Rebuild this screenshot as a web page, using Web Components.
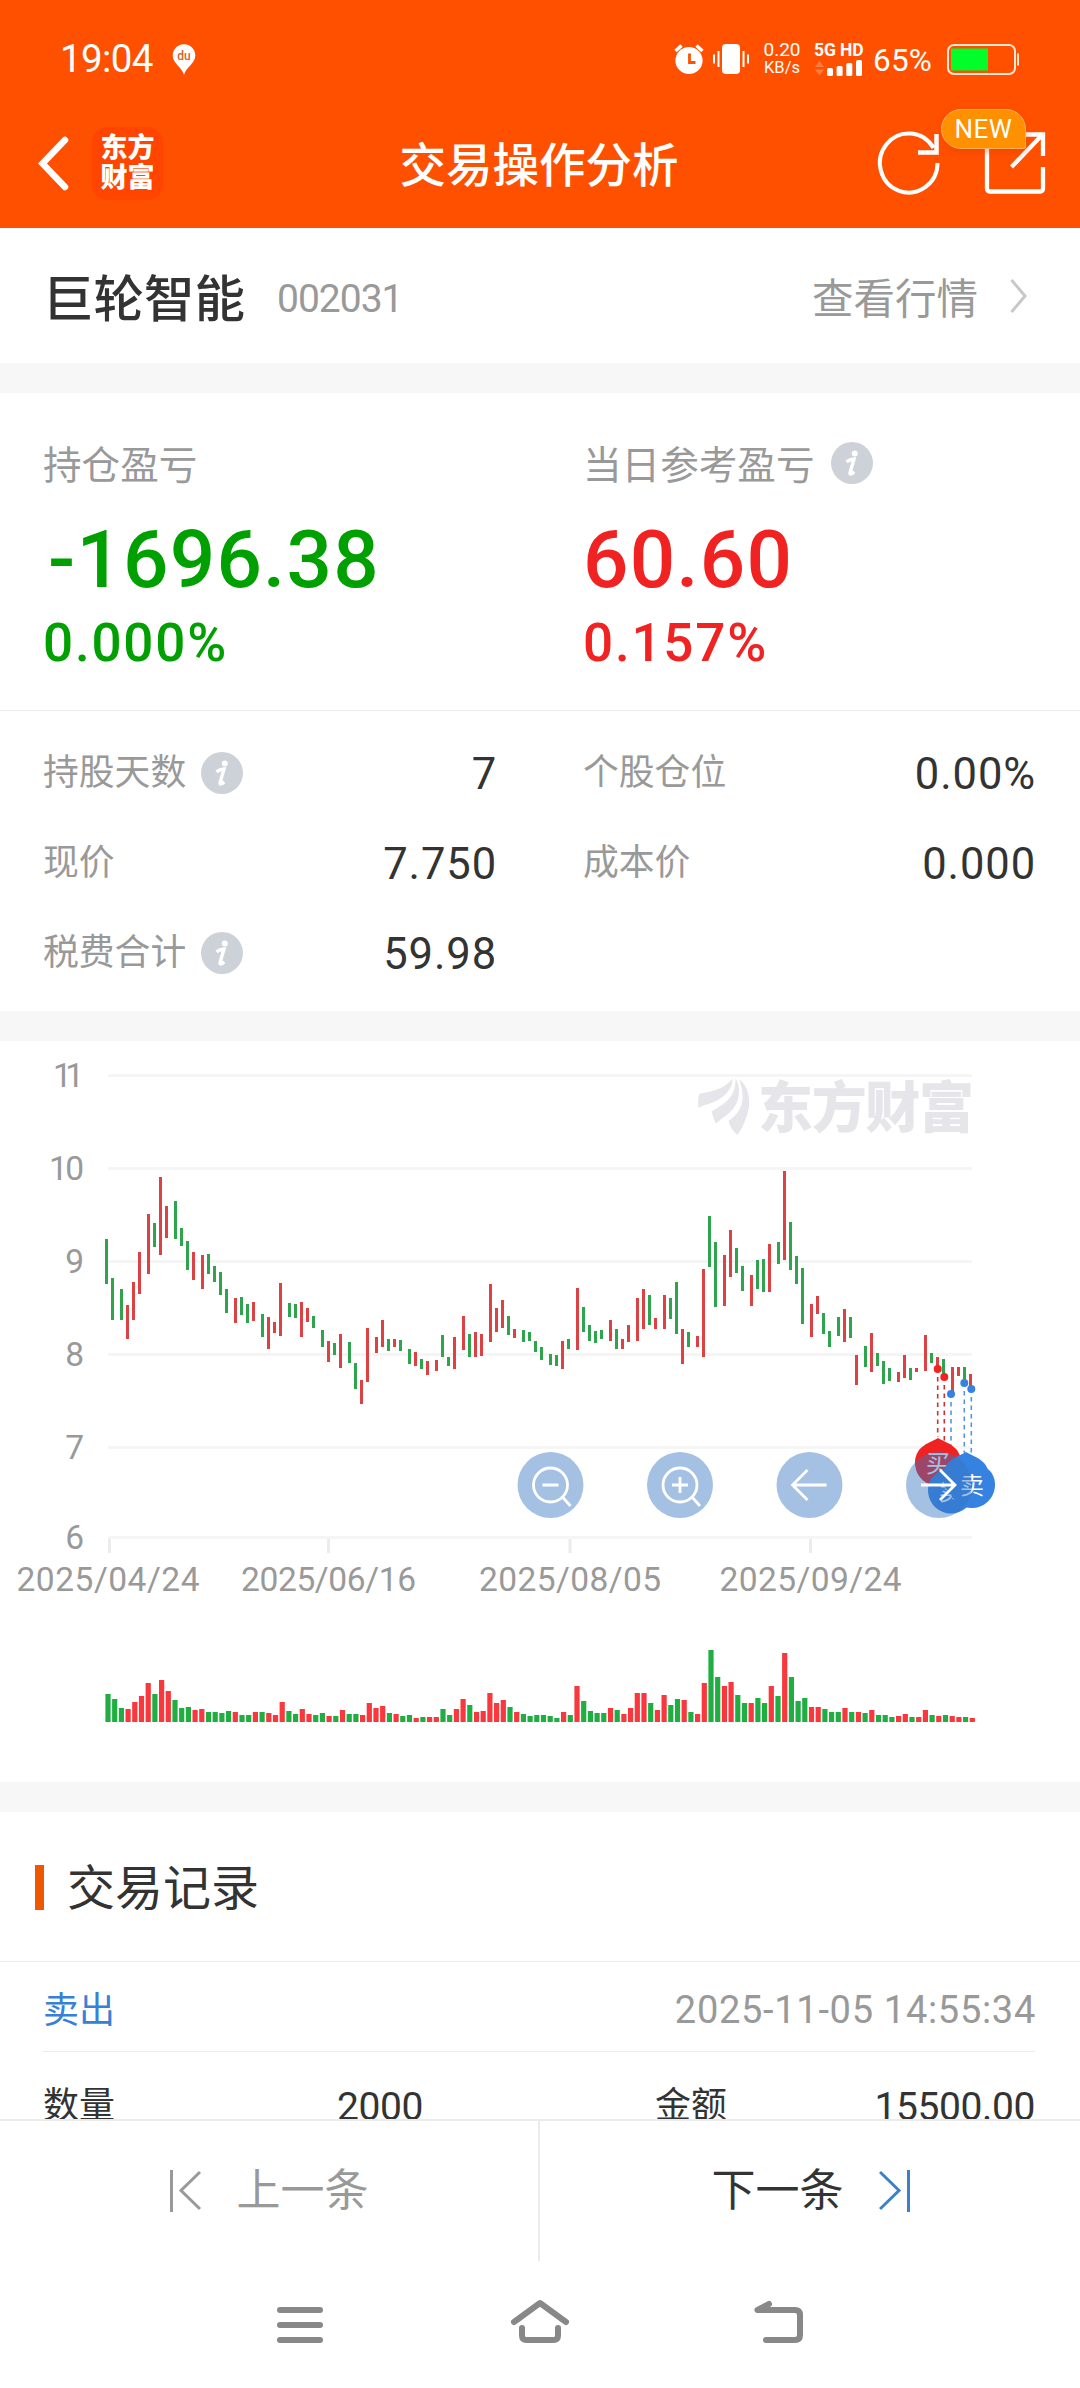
<!DOCTYPE html>
<html lang="zh-CN">
<head>
<meta charset="utf-8">
<title>交易操作分析</title>
<style>
  body {
    margin: 0;
    background: #fff;
    color: #333;
    font-family: Roboto, "Noto Sans CJK SC", sans-serif;
  }
</style>
</head>
<body>
<trade-app></trade-app>

<script>
class Element extends HTMLElement {
  constructor() {
    super();
    this.attachShadow({ mode: 'open' });
  }

  connectedCallback() {
    this.shadowRoot.innerHTML = this.render();
  }
}

class StatusBar extends Element {
  render() {
    return `
      <style>
        :host {
          display: flex;
          justify-content: space-between;
          height: 118px;
          padding: 0 60px 0 60px;
          color: #fff;
        }
        .side { display: flex; align-items: center; }
        .time { font-size: 38.5px; letter-spacing: -.6px; width: 93px; line-height: 118px; }
        svg { display: block; overflow: visible; }
        .pin { margin-left: 19px; }
        .speed { width: 40px; margin: 0 0 0 20px; text-align: center; font-size: 19px; line-height: 18px; }
        .speed div + div { font-size: 16.5px; }
        .net { width: 50px; margin-left: 12px; font-size: 17.5px; font-weight: 700; line-height: 17px; height: 35px; }
        .net div { letter-spacing: -.1px; white-space: nowrap; }
        .percent { margin-left: 9px; width: 64px; font-size: 31.5px; letter-spacing: .2px; line-height: 120px; padding-top: 3px; }
        .battery { margin-left: 10px; }
      </style>
      <div class="side">
        <span class="time">19:04</span>
        <svg class="pin" width="24" height="31" viewBox="0 0 24 31">
          <path d="M12 31C10 23 1 20 .7 11.500A11.300 11.300 0 0 1 23.300 11.500C23 20 14 23 12 31Z" fill="#fff"/>
          <text x="12" y="15.500" text-anchor="middle" font-size="12" font-weight="500" fill="#d9601c">du</text>
        </svg>
      </div>
      <div class="side">
        <svg width="70" height="32" viewBox="0 0 70 32">
          <circle cx="17" cy="17.500" r="13.600" fill="#fff"/>
          <path d="M3.500 8l6-5.500M30.500 8l-6-5.500" stroke="#fff" stroke-width="3.400"/>
          <path d="M17.500 10.500v9h6" stroke="#ff5000" stroke-width="2.800" fill="none"/>
          <rect x="50" y="1" width="18" height="30" rx="4" fill="#fff"/>
          <path d="M46.500 8v16M42 11.500v9M71.500 8v16M76 11.500v9" stroke="#fff" stroke-width="2"/>
        </svg>
        <div class="speed"><div>0.20</div><div>KB/s</div></div>
        <div class="net">
          <div>5G HD</div>
          <svg width="50" height="18" viewBox="0 0 50 18">
            <path d="M1 8l4.500-6 4.500 6zM1 10.500l4.500 6 4.500-6z" fill="#ff7d40"/>
            <g fill="#fff">
              <rect x="13" y="9" width="6" height="8" rx="1.500"/>
              <rect x="22.600" y="7" width="6" height="10" rx="1.500"/>
              <rect x="32.300" y="4" width="6" height="13" rx="1.500"/>
              <rect x="42" y="1" width="6" height="16" rx="1.500"/>
            </g>
          </svg>
        </div>
        <span class="percent">65%</span>
        <svg class="battery" width="73" height="31" viewBox="0 0 73 31">
          <rect x="1" y="1" width="67" height="29" rx="6" fill="none" stroke="#ffe8d8" stroke-width="2"/>
          <rect x="4" y="4.500" width="37" height="22" fill="#00ff2a"/>
          <path d="M70 9.500h2v12h-2z" fill="#ffe8d8"/>
        </svg>
      </div>`;
  }
}

class TitleBar extends Element {
  render() {
    return `
      <style>
        :host {
          display: grid;
          grid-template-columns: 1fr auto 1fr;
          align-items: center;
          height: 90px;
          padding: 0 35px 20px 37px;
          color: #fff;
        }
        svg { display: block; overflow: visible; }
        .left { display: flex; align-items: center; gap: 21px; }
        .brand {
          display: flex;
          flex-direction: column;
          justify-content: center;
          width: 71px;
          height: 73px;
          border-radius: 15px;
          background: #ff4500;
          font-size: 27px;
          font-weight: 900;
          line-height: 30.500px;
          text-align: center;
        }
        h1 { margin: 0; font-size: 46.500px; font-weight: 500; line-height: 60px; padding: 6px 4px 0 0; }
        .right { display: flex; justify-content: flex-end; gap: 43px; }
        .share { position: relative; }
        .badge {
          position: absolute;
          left: -42px;
          top: -22px;
          box-sizing: border-box;
          width: 85px;
          height: 40px;
          border: 1.500px solid #ffad5c;
          border-radius: 20px 20px 2px 20px;
          background: #ff9000;
          box-shadow: 0 3px 6px rgba(220, 60, 0, .35);
          font-size: 26px;
          letter-spacing: .5px;
          line-height: 38px;
          text-align: center;
        }
      </style>
      <div class="left">
        <svg width="34" height="56" viewBox="0 0 34 56">
          <path d="M28 5L5.500 28.500 28 52" fill="none" stroke="#fff" stroke-width="6.500" stroke-linecap="round"/>
        </svg>
        <div class="brand"><span>东方</span><span>财富</span></div>
      </div>
      <h1><slot></slot></h1>
      <div class="right">
        <svg width="62" height="64" viewBox="0 0 62 64">
          <path d="M59.500 32A28.800 29.500 0 1 1 55.500 17" fill="none" stroke="#fff" stroke-width="4"/>
          <path d="M58.500 3v18.500H40" fill="none" stroke="#fff" stroke-width="4.500"/>
        </svg>
        <div class="share">
          <svg width="62" height="64" viewBox="0 0 62 64">
            <path d="M4 10V58a2.500 2.500 0 0 0 2.500 2.500H57.500A2.500 2.500 0 0 0 60 58V36" fill="none" stroke="#fff" stroke-width="4.300"/>
            <path d="M35 3.500H60V25M59 4L28.500 36" fill="none" stroke="#fff" stroke-width="4.300"/>
          </svg>
          <span class="badge">NEW</span>
        </div>
      </div>`;
  }
}

class StockRow extends Element {
  render() {
    return `
      <style>
        :host {
          display: flex;
          align-items: center;
          height: 135px;
          padding: 0 53px 0 43px;
        }
        .name { font-size: 50.500px; font-weight: 500; line-height: 60px; padding-top: 9px; }
        .code { margin-left: 32px; color: #999; font-size: 39px; letter-spacing: -1px; padding-top: 6px; }
        .more { margin-left: auto; color: #999; font-size: 41.500px; line-height: 60px; padding-top: 8px; }
        svg { margin-left: 32px; }
      </style>
      <span class="name"><slot></slot></span>
      <span class="code">${this.getAttribute('code')}</span>
      <span class="more">查看行情</span>
      <svg width="17" height="36" viewBox="0 0 17 36">
        <path d="M1.500 2L15 18 1.500 34" fill="none" stroke="#c8c8c8" stroke-width="3"/>
      </svg>`;
  }
}

class InfoDot extends Element {
  render() {
    return `
      <style>
        :host { display: block; width: 42px; height: 42px; }
        svg { display: block; }
      </style>
      <svg width="42" height="42" viewBox="0 0 42 42">
        <circle cx="21" cy="21" r="21" fill="#cdd1d8"/>
        <circle cx="23.800" cy="11.500" r="3" fill="#fff"/>
        <path d="M15.500 19.800c2-1.600 4.500-2.600 7.500-2.800l-4 13.800c-.6 2.200 2 1.200 4.200-1" fill="none" stroke="#fff" stroke-width="3.400"/>
      </svg>`;
  }
}

class ProfitFigure extends Element {
  render() {
    return `
      <style>
        :host { display: block; }
        .label { display: flex; align-items: center; gap: 17px; height: 50px; color: #999; font-size: 38.600px; line-height: 50px; }
        .label span { padding-top: 6px; }
        .amount { font-size: 80px; font-weight: 500; line-height: 90px; letter-spacing: 1.200px; margin-top: 27px; }
        .amount.minus { text-indent: 5px; }
        .rate { font-size: 53px; font-weight: 500; line-height: 60px; letter-spacing: 1.800px; margin-top: 8px; }
      </style>
      <div class="label"><span>${this.getAttribute('label')}</span>${this.hasAttribute('info') ? '<info-dot></info-dot>' : ''}</div>
      <div class="amount ${this.textContent.startsWith('-') ? 'minus' : ''}"><slot></slot></div>
      <div class="rate">${this.getAttribute('rate')}</div>`;
  }
}

class StatItem extends Element {
  render() {
    return `
      <style>
        :host { display: flex; align-items: center; height: 90px; }
        .label { color: #999; font-size: 35.800px; line-height: 50px; padding-bottom: 1px; }
        info-dot { margin-left: 15px; }
        .value { margin-left: auto; font-size: 43.500px; letter-spacing: .900px; margin-right: -1px; padding-top: 3px; }
      </style>
      <span class="label">${this.getAttribute('label')}</span>
      ${this.hasAttribute('info') ? '<info-dot></info-dot>' : ''}
      <span class="value"><slot></slot></span>`;
  }
}

class PositionSummary extends Element {
  render() {
    return `
      <style>
        :host { display: block; }
        .profit {
          display: grid;
          grid-template-columns: 540px 1fr;
          box-sizing: border-box;
          height: 318px;
          padding: 45px 0 0 43px;
          border-bottom: 1px solid #ebebeb;
        }
        .down { color: #00a000; }
        .up { color: #f02222; }
        .stats {
          display: grid;
          grid-template-columns: 453px 452px;
          column-gap: 87px;
          align-content: start;
          box-sizing: border-box;
          height: 300px;
          padding: 17px 0 0 43px;
        }
      </style>
      <div class="profit">
        <profit-figure class="down" label="持仓盈亏" rate="0.000%">-1696.38</profit-figure>
        <profit-figure class="up" label="当日参考盈亏" rate="0.157%" info>60.60</profit-figure>
      </div>
      <div class="stats">
        <stat-item label="持股天数" info>7</stat-item>
        <stat-item label="个股仓位">0.00%</stat-item>
        <stat-item label="现价">7.750</stat-item>
        <stat-item label="成本价">0.000</stat-item>
        <stat-item label="税费合计" info>59.98</stat-item>
      </div>`;
  }
}

// direction, x, high, low
const candles = `
G105,198,243 G111,237,279 G120,248,279 R126,264,298 R132,241,279 R138,211,253 R147,173,233 G153,182,206
R159,136,214 R165,165,197 G174,160,198 G180,187,205 G186,200,229 R192,211,239 R201,214,248 G207,213,233
G213,225,241 G219,231,254 G225,248,272 R234,257,282 G240,256,274 G246,263,282 R252,261,280 G261,273,296
R267,276,308 R273,281,292 R279,242,295 G288,262,276 G294,263,277 R300,261,296 R306,267,281 G312,275,287
G321,289,306 R327,300,321 G333,302,314 R339,293,327 G348,301,322 G354,322,348 R360,339,363 R366,287,341
R375,296,312 R381,279,306 G387,298,310 R393,298,306 G399,299,310 G408,308,323 R414,311,325 G420,318,328
R426,320,334 R435,319,330 G441,294,316 G447,316,325 R453,296,328 R462,275,309 G468,293,316 R474,291,316
R480,293,315 R489,243,301 R495,267,291 R501,259,287 G507,275,294 R513,288,297 G522,289,301 G528,291,300
G534,300,311 G540,306,319 G549,313,324 G555,314,325 R561,300,328 G567,298,308 R576,247,309 G582,266,291
G588,284,300 G594,290,302 G600,289,298 R609,279,300 G615,288,308 R621,298,308 R627,284,301 R636,257,300
R642,248,288 G648,254,284 R654,277,288 R663,254,288 G669,257,278 G675,241,293 R681,288,323 G687,291,306
R696,295,306 R702,228,316 G708,175,226 G714,201,266 R723,214,265 R729,189,236 G735,207,232 G741,225,250
R750,234,265 G756,219,248 G762,218,251 R768,203,251 G777,201,223 R783,130,219 G789,181,229 G795,215,243
G801,227,283 R810,263,296 R816,255,273 G822,272,293 G828,290,306 G837,276,295 R843,268,301 G849,276,297
R855,314,344 G864,305,326 R870,292,331 G876,312,325 G882,320,343 G888,327,340 R897,331,341 R903,314,337
G909,327,339 R915,327,331 R924,294,330 G930,312,322 R936,316,328 G942,318,334 R951,326,351 R957,326,335
G963,326,341 R969,333,347`.trim().split(/\s+/);

const volumes = `
G28 G23 G14 R13 R20 R26 R39 G28 R42 R31 G22 G14 G15 R12 R13 G10 G10 G9 G11 R10
G7 G7 R10 G10 R9 R7 R20 G11 G8 R13 R8 G7 G9 R6 G6 R12 G8 G8 R7 R19
R14 R16 G9 R8 G6 G7 R4 G5 R5 R5 G13 G7 R13 R23 G17 R10 R11 R29 R19 R22
G15 R10 G8 G6 G7 G7 G6 G4 R10 G7 R36 G21 G11 G9 G9 R14 G12 R8 R14 R29
R29 G19 R12 R27 G17 G23 R22 G10 R8 R39 G72 G45 R36 R40 G27 G19 R19 G24 G19 R36
G26 R69 G45 G21 G24 R15 R15 G13 G10 G10 R14 G10 R10 G9 R12 G7 G7 G5 R6 R8
G5 R5 R12 G7 R6 G7 R6 R5 G5 R4`.trim().split(/\s+/);

class PriceChart extends Element {
  grid() {
    const lines = [[11, 34, 31], [10, 127, 35], [9, 220], [8, 313], [7, 406], [6, 496]];
    const dates = [[108, '2025/04/24', 183], [328.5, '2025/06/16', 175], [570, '2025/08/05', 182], [810.5, '2025/09/24', 182]];
    return lines.map(([v, y, w]) => `
      <rect x="108" y="${y - 1}" width="864" height="3" fill="#f5f5f5"/>
      <text x="84" y="${y + 12}" text-anchor="end" ${w ? `textLength="${w}"` : ''}>${v}</text>`).join('') +
      dates.map(([x, d, w], i) => `
      <rect x="${i ? x - 1.5 : 108}" y="498" width="3" height="14" fill="#ececec"/>
      <text x="${x}" y="550" text-anchor="middle" textLength="${w}">${d}</text>`).join('');
  }

  price() {
    return candles.map((c) => {
      const [x, high, low] = c.slice(1).split(',').map(Number);
      return `<rect x="${x}" y="${high}" width="3" height="${low - high}" fill="${c[0] === 'G' ? '#2ea44c' : '#dc4144'}"/>`;
    }).join('');
  }

  volume() {
    return volumes.map((v, i) => {
      const h = Number(v.slice(1));
      return `<rect x="${(105.4 + i * 6.7).toFixed(1)}" y="${681 - h}" width="5.200" height="${h}" fill="${v[0] === 'G' ? '#20ae42' : '#f8383c'}"/>`;
    }).join('');
  }

  pin(x, y, color, label) {
    return `
      <path d="M${x} ${y - 24}C${x + 7} ${y - 20} ${x + 14} ${y - 18} ${x + 19} ${y - 12}A23 23 0 1 1 ${x - 19} ${y - 12}C${x - 14} ${y - 18} ${x - 7} ${y - 20} ${x} ${y - 24}Z" fill="${color}"/>
      <text x="${x}" y="${y + 10}" text-anchor="middle" style="font-size:24px;fill:#fff">${label}</text>`;
  }

  marks() {
    const red = '#f02222';
    const blue = '#3682e0';
    const dots = [[937.7, 328, 396, red], [944.3, 336, 402, red], [951, 353, 414, blue], [964.3, 342, 412, blue], [971.3, 348, 412, blue]];
    return dots.map(([x, y, end, color]) => `
      <line x1="${x}" y1="${y + 8}" x2="${x}" y2="${end}" stroke="${color === red ? '#d03030' : '#5595e0'}" stroke-width="1.600" stroke-dasharray="4.500 4"/>
      <circle cx="${x}" cy="${y}" r="4" fill="${color}"/>`).join('') +
      this.pin(938, 421, red, '买') + this.pin(951, 448.5, blue, '卖') +
      this.pin(966, 435, blue, '') + this.pin(972, 443, blue, '卖');
  }

  buttons() {
    const icons = [
      '<circle r="17"/><path d="M-8 0h16M12 12l8 9"/>',
      '<circle r="17"/><path d="M-8 0h16M0-8v16M12 12l8 9"/>',
      '<path d="M17 0h-34M-2-15l-15 15 15 15"/>',
      '<path d="M-18 0h34M1-15l15 15-15 15"/>',
    ];
    return icons.map((icon, i) => `
      <g transform="translate(${[550.5, 680, 809.5, 939][i]} 444)" fill="none" stroke="#fff" stroke-width="2.800">
        <circle r="33" fill="#3575c1" fill-opacity=".45" stroke="none"/>${icon}
      </g>`).join('');
  }

  render() {
    return `
      <style>
        :host { display: block; height: 741px; }
        svg { display: block; }
        text { fill: #999; font-size: 33.500px; }
        .brand { fill: #e6e6ea; font-size: 55px; font-weight: 900; }
      </style>
      <svg width="1080" height="741" viewBox="0 0 1080 741">
        ${this.grid()}
        <g fill="#e6e6ea">
          <path d="M698.500 67C698 60 698 55 700 52.500C708 51 724 49 732.500 37.500C733 48 724 56 716 60C710 63 703 64 698.500 67Z"/>
          <path d="M735.500 37C743 51 738 65 728 73Q721 78 716 82.500Q713 77 711.500 70.500C724 63 736 57 735.500 37Z"/>
          <path d="M739 38C748 45 750 56 749 66Q746 82 737.500 94Q731 89 728.500 80C741 71 747 60 739 38Z"/>
        </g>
        <text class="brand" x="758" y="86" textLength="216">东方财富</text>
        ${this.price()}
        ${this.marks()}
        ${this.buttons()}
        ${this.volume()}
      </svg>`;
  }
}

class TradeRecord extends Element {
  render() {
    return `
      <style>
        :host { display: block; padding: 0 45px 0 43px; font-size: 36px; }
        .head, .cells { display: flex; align-items: center; box-sizing: border-box; }
        .head { justify-content: space-between; height: 90px; border-bottom: 1px solid #ececec; padding-top: 1px; }
        .side { color: #3780d8; }
        .time { color: #999; font-size: 38px; letter-spacing: .700px; padding-top: 5px; margin-right: -1px; }
        .cells { justify-content: space-between; height: 110px; }
        .cell { display: flex; justify-content: space-between; align-items: center; width: 380px; line-height: 50px; }
        .cell span { padding-bottom: 3px; }
        .cell b { font-size: 39px; font-weight: 400; letter-spacing: -.400px; }
      </style>
      <div class="head">
        <span class="side"><slot></slot></span>
        <span class="time">${this.getAttribute('time')}</span>
      </div>
      <div class="cells">
        <div class="cell"><span>数量</span><b>${this.getAttribute('count')}</b></div>
        <div class="cell"><span>金额</span><b>${this.getAttribute('total')}</b></div>
      </div>`;
  }
}

class RecordList extends Element {
  render() {
    return `
      <style>
        :host { display: block; height: 308px; overflow: hidden; }
        h2 {
          display: flex;
          align-items: center;
          gap: 23px;
          box-sizing: border-box;
          height: 150px;
          margin: 0;
          padding: 1px 0 0 35px;
          border-bottom: 1px solid #ebebeb;
          font-size: 48px;
          font-weight: 400;
          line-height: 60px;
        }
        h2::before { content: ""; width: 9px; height: 45px; background: #ee5800; }
        h2 span { padding-top: 4px; }
      </style>
      <h2><span>交易记录</span></h2>
      <slot></slot>`;
  }
}

class PagerBar extends Element {
  render() {
    return `
      <style>
        :host { display: flex; box-sizing: border-box; height: 142px; margin-top: -1px; border-top: 2px solid #ebebeb; background: #fff; font-size: 44px; line-height: 60px; }
        .item { display: flex; flex: 1; align-items: center; justify-content: center; gap: 35px; }
        .prev { color: #999; border-right: 2px solid #ebebeb; }
        .next { padding-left: 2px; }
        svg { display: block; fill: none; stroke-width: 3; }
      </style>
      <div class="item prev">
        <svg width="32" height="42" viewBox="0 0 32 42" stroke="#999"><path d="M1.500 0v42M30 2L11 20.500 30 39"/></svg>
        <span>上一条</span>
      </div>
      <div class="item next">
        <span>下一条</span>
        <svg width="32" height="42" viewBox="0 0 32 42" stroke="#3c80cc"><path d="M29.500 0v42M1 2l19 18.500L1 39"/></svg>
      </div>`;
  }
}

class SystemNav extends Element {
  render() {
    return `
      <style>
        :host { display: flex; justify-content: space-between; height: 126px; padding: 0 276px 0 275px; align-items: center; }
        svg { display: block; fill: none; stroke: #888; stroke-width: 6; stroke-linecap: round; stroke-linejoin: round; }
      </style>
      <svg width="50" height="50" viewBox="0 0 50 50"><path d="M5 11h40M5 26h40M5 41h40"/></svg>
      <svg width="60" height="50" viewBox="0 0 60 50"><path d="M4 23L30 4l26 19M12 29v7.500q0 4.500 4.500 4.500h27q4.500 0 4.500-4.500V29"/></svg>
      <svg width="50" height="50" viewBox="0 0 50 50"><path d="M15 5L3.500 11H41q5 0 5 5v20q0 5-5 5H12"/></svg>`;
  }
}

class TradeApp extends Element {
  render() {
    return `
      <style>
        :host { display: flex; flex-direction: column; width: 1080px; height: 2388px; overflow: hidden; background: #fff; }
        header { height: 228px; background: #ff5000; }
        .band { height: 30px; background: #f7f7f7; }
      </style>
      <header>
        <status-bar></status-bar>
        <title-bar>交易操作分析</title-bar>
      </header>
      <stock-row code="002031">巨轮智能</stock-row>
      <div class="band"></div>
      <position-summary></position-summary>
      <div class="band"></div>
      <price-chart></price-chart>
      <div class="band"></div>
      <record-list>
        <trade-record time="2025-11-05 14:55:34" count="2000" total="15500.00">卖出</trade-record>
      </record-list>
      <pager-bar></pager-bar>
      <system-nav></system-nav>`;
  }
}

customElements.define('status-bar', StatusBar);
customElements.define('title-bar', TitleBar);
customElements.define('stock-row', StockRow);
customElements.define('info-dot', InfoDot);
customElements.define('profit-figure', ProfitFigure);
customElements.define('stat-item', StatItem);
customElements.define('position-summary', PositionSummary);
customElements.define('price-chart', PriceChart);
customElements.define('trade-record', TradeRecord);
customElements.define('record-list', RecordList);
customElements.define('pager-bar', PagerBar);
customElements.define('system-nav', SystemNav);
customElements.define('trade-app', TradeApp);
</script>
</body>
</html>
